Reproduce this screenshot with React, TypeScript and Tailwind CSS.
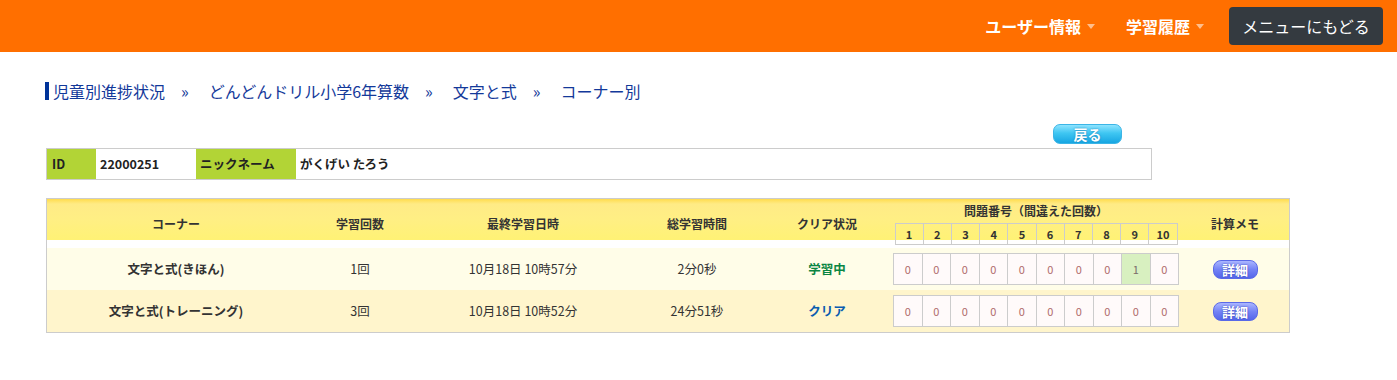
import React from 'react';

const rows = [
  {
    corner: '文字と式(きほん)',
    times: '1回',
    last: '10月18日 10時57分',
    total: '2分0秒',
    status: '学習中',
    statusColor: 'text-[#0a8542]',
    counts: [0, 0, 0, 0, 0, 0, 0, 0, 1, 0],
    bg: 'bg-[#fffde8]',
  },
  {
    corner: '文字と式(トレーニング)',
    times: '3回',
    last: '10月18日 10時52分',
    total: '24分51秒',
    status: 'クリア',
    statusColor: 'text-[#0a5cb0]',
    counts: [0, 0, 0, 0, 0, 0, 0, 0, 0, 0],
    bg: 'bg-[#fff5cc]',
  },
];

const cols = 'grid grid-cols-[258px_110px_216px_132px_128px_290px_108px]';

function Caret() {
  return <span className="ml-[6px] inline-block h-0 w-0 border-l-[4px] border-r-[4px] border-t-[5px] border-l-transparent border-r-transparent border-t-white/55" />;
}

function Sep() {
  return <span className="ml-[16px] mr-[20px]">»</span>;
}

export default function App() {
  return (
    <div className="min-h-[380px] bg-white font-['Noto_Sans_CJK_JP',sans-serif] text-[#333]">
      {/* top bar */}
      <header className="flex h-[52px] items-center justify-end bg-[#ff6f00] pr-[14px]">
        <div className="flex items-center text-[16px] font-bold text-white">
          ユーザー情報
          <Caret />
        </div>
        <div className="ml-[31px] flex items-center text-[16px] font-bold text-white">
          学習履歴
          <Caret />
        </div>
        <button className="ml-[25px] h-[38px] w-[154px] rounded-[4px] bg-[#343a40] text-[16px] text-white">
          メニューにもどる
        </button>
      </header>

      {/* breadcrumb */}
      <nav className="mt-[30px] ml-[45px] flex h-[18px] items-center text-[16px] text-[#13399a]">
        <span className="mr-[4px] h-[18px] w-[4px] bg-[#003399]" />
        児童別進捗状況
        <Sep />
        どんどんドリル小学6年算数
        <Sep />
        文字と式
        <Sep />
        コーナー別
      </nav>

      <div className="ml-[46px] w-[1106px]">
        <div className="mt-[24px] flex justify-end pr-[30px]">
          <button className="h-[20px] w-[69px] rounded-[7px] border border-[#3cb5e6] bg-[linear-gradient(to_bottom,#8ee4ff_0%,#3fc6f2_45%,#17a6e2_100%)] text-[14px] leading-[18px] font-bold text-white [text-shadow:0_0_2px_#1a7fb5]">
            戻る
          </button>
        </div>

        {/* id / nickname */}
        <div className="mt-[4px] flex h-[32px] border border-[#ccc] text-[12.5px] font-bold text-[#222]">
          <div className="flex w-[49px] items-center bg-[#b2d436] pl-[5px]">ID</div>
          <div className="flex w-[100px] items-center pl-[4px]">22000251</div>
          <div className="flex w-[100px] items-center bg-[#b2d436] pl-[4px]">ニックネーム</div>
          <div className="flex flex-1 items-center pl-[4px]">がくげい たろう</div>
        </div>
      </div>

      {/* corner table */}
      <div className="mt-[18px] ml-[46px] w-[1244px] border border-[#ccc] text-[12px]">
        <div className={`${cols} h-[49px] bg-[linear-gradient(to_bottom,#ffdc4e_0px,#ffeb86_5px,#ffef84_20px,#fff275_41px,#ffffff_41px)] font-bold`}>
          <div className="flex items-center justify-center">コーナー</div>
          <div className="flex items-center justify-center">学習回数</div>
          <div className="flex items-center justify-center">最終学習日時</div>
          <div className="flex items-center justify-center">総学習時間</div>
          <div className="flex items-center justify-center">クリア状況</div>
          <div className="flex flex-col items-center pt-[2px]">
            <div className="h-[20px] leading-[20px]">問題番号（間違えた回数）</div>
            <div className="mt-[2px] grid w-[283px] grid-cols-10 border-t border-l border-[#ccc]">
              {Array.from({ length: 10 }, (_, i) => (
                <div key={i} className="flex h-[21px] items-center justify-center border-r border-b border-[#ccc] text-[11px]">
                  {i + 1}
                </div>
              ))}
            </div>
          </div>
          <div className="flex items-center justify-center">計算メモ</div>
        </div>

        {rows.map((r) => (
          <div key={r.corner} className={`${cols} h-[42px] text-[12.5px] ${r.bg}`}>
            <div className="flex items-center justify-center font-bold">{r.corner}</div>
            <div className="flex items-center justify-center">{r.times}</div>
            <div className="flex items-center justify-center">{r.last}</div>
            <div className="flex items-center justify-center">{r.total}</div>
            <div className={`flex items-center justify-center font-bold ${r.statusColor}`}>{r.status}</div>
            <div className="flex items-center justify-center">
              <div className="grid w-[286px] grid-cols-10 border-t border-l border-[#ccc]">
                {r.counts.map((c, i) => (
                  <div
                    key={i}
                    className={`flex h-[31px] items-center justify-center border-r border-b border-[#ccc] text-[11px] ${
                      c > 0 ? 'bg-[#d8f0c0] text-[#7a6a6a]' : 'bg-[#fffafa] text-[#b06a6a]'
                    }`}
                  >
                    {c}
                  </div>
                ))}
              </div>
            </div>
            <div className="flex items-center justify-center">
              <button className="h-[19px] w-[45px] rounded-[8px] border border-[#5a6ae8] bg-[linear-gradient(to_bottom,#aab6ff_0%,#7483f5_50%,#5566ea_100%)] text-[13px] leading-[17px] font-bold text-white [text-shadow:0_0_2px_#3040b0]">
                詳細
              </button>
            </div>
          </div>
        ))}
      </div>
    </div>
  );
}
